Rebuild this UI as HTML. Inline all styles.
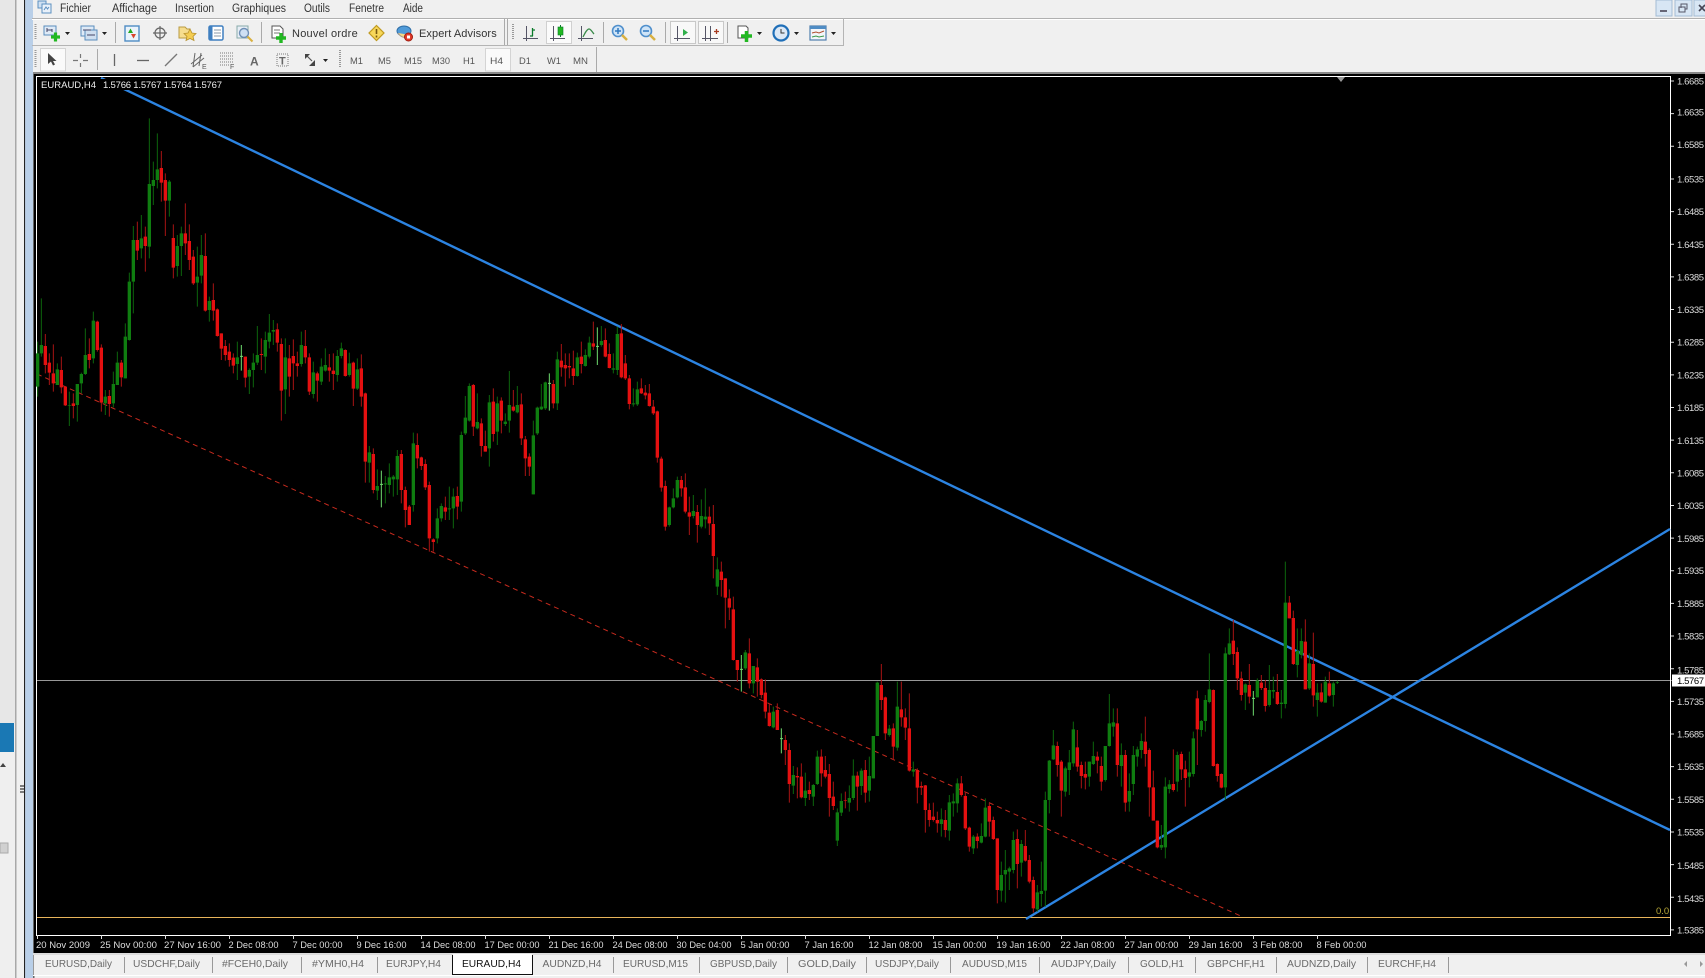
<!DOCTYPE html>
<html><head><meta charset="utf-8"><title>EURAUD,H4</title>
<style>
html,body{margin:0;padding:0;background:#f0f0f0;overflow:hidden}
svg{display:block;position:absolute;left:0;top:0}
text{font-family:"Liberation Sans",sans-serif}
.m{font-size:11.5px;fill:#333}
.t{font-size:11px;fill:#333;letter-spacing:.3px}
.tf{font-size:9.5px;fill:#555}
.p{font-size:9.5px;fill:#ddd}
.d{font-size:9.5px;fill:#ddd}
.tab{font-size:10.5px;fill:#6a6a6a}
.gw,.gb,.rw,.rb,.lg{fill:none}
.gw{stroke:#0c650c;stroke-width:3}
.gb{stroke:#0f7d10;stroke-width:10}
.rw{stroke:#a81414;stroke-width:3}
.rb{stroke:#e41010;stroke-width:10}
.lg{stroke:#6fdc6f;stroke-width:3}
</style></head><body>
<svg width="1705" height="978" viewBox="0 0 1705 978" xmlns="http://www.w3.org/2000/svg">
<!-- base -->
<rect width="1705" height="978" fill="#f0f0f0"/>
<!-- left panel -->
<rect x="0" y="0" width="15" height="723" fill="#e7e7e7"/>
<rect x="0" y="723" width="14" height="29" fill="#1a78b4"/>
<rect x="0" y="752" width="15" height="226" fill="#efefef"/>
<rect x="15" y="0" width="1.5" height="978" fill="#a8a8a8"/>
<rect x="24" y="0" width="1.2" height="978" fill="#222"/>
<rect x="25.2" y="0" width="7.8" height="978" fill="#b9cfe8"/>
<rect x="33" y="0" width="1.5" height="978" fill="#666"/>
<rect x="0" y="843" width="8" height="10" fill="#d0d0d0" stroke="#aaa"/>
<path d="M0 767h6l-3-4z" fill="#444"/>
<path d="M20 786h4M20 789h4M20 792h4" stroke="#555" stroke-width="1.5"/>
<!-- top chrome background -->
<rect x="33" y="0" width="1672" height="72" fill="#f0f0f0"/>
<rect x="32" y="18" width="1673" height="1" fill="#b0b0b0"/>
<rect x="32" y="19" width="1673" height="1" fill="#fff"/>
<rect x="32" y="45" width="811" height="1" fill="#b4b4b4"/>
<rect x="843" y="18" width="1" height="28" fill="#b4b4b4"/>
<rect x="33" y="72" width="1672" height="2" fill="#888"/>
<!-- menu -->
<g fill="none"><rect x="38" y="1" width="8" height="7" fill="#cfe0f2" stroke="#5b8fc0"/><rect x="42" y="4" width="9" height="9" fill="#e9f1fa" stroke="#5b8fc0"/><path d="M44 10l2-3 1.5 2 1.5-2" stroke="#5b8fc0"/></g>
<text class="m" x="60" y="12" textLength="31" lengthAdjust="spacingAndGlyphs">Fichier</text>
<text class="m" x="112" y="12" textLength="45" lengthAdjust="spacingAndGlyphs">Affichage</text>
<text class="m" x="175" y="12" textLength="39" lengthAdjust="spacingAndGlyphs">Insertion</text>
<text class="m" x="232" y="12" textLength="54" lengthAdjust="spacingAndGlyphs">Graphiques</text>
<text class="m" x="304" y="12" textLength="26" lengthAdjust="spacingAndGlyphs">Outils</text>
<text class="m" x="349" y="12" textLength="35" lengthAdjust="spacingAndGlyphs">Fenetre</text>
<text class="m" x="403" y="12" textLength="20" lengthAdjust="spacingAndGlyphs">Aide</text>
<!-- window buttons -->
<rect x="1656" y="0" width="16" height="16" fill="#d8e6f4" stroke="#a4bcd4"/>
<rect x="1660" y="10" width="7" height="2" fill="#667"/>
<rect x="1675" y="0" width="17" height="16" fill="#d8e6f4" stroke="#a4bcd4"/>
<path d="M1681 8V4h6v5h-2M1679 7h6v5h-6z" fill="none" stroke="#556" stroke-width="1"/>
<rect x="1694" y="0" width="12" height="16" fill="#d8e6f4" stroke="#a4bcd4"/>
<path d="M1699 5l6 6M1705 5l-6 6" stroke="#445" stroke-width="1.6"/>
<!-- grips -->
<path d="M35.5 24V40" stroke="#999" stroke-width="2" stroke-dasharray="1 1"/>
<path d="M513 24V40" stroke="#999" stroke-width="2" stroke-dasharray="1 1"/>
<path d="M35.5 50V68" stroke="#999" stroke-width="2" stroke-dasharray="1 1"/>
<path d="M340 50V68" stroke="#999" stroke-width="2" stroke-dasharray="1 1"/>
<!-- toolbar 1 separators -->
<path d="M115.500 22V43M261.500 22V43M504.500 19V45M507.500 19V45M603.500 22V43M665.500 22V43M727.500 22V43" stroke="#aaa"/>
<!-- new chart -->
<rect x="44" y="26" width="12" height="9" fill="#dfeaf6" stroke="#5a8dbd"/>
<path d="M47 28v4M47 30h5M52 29v3" stroke="#446"/>
<path d="M51 37h9M55.500 32.500v9" stroke="#22b822" stroke-width="3.200"/>
<path d="M65 32h5l-2.500 3z" fill="#222"/>
<!-- profiles -->
<rect x="81" y="26" width="13" height="10" fill="#dfeaf6" stroke="#5a8dbd"/>
<rect x="85" y="30" width="12" height="10" fill="#cfdff0" stroke="#5a8dbd"/>
<path d="M83 30h8M87 35h8" stroke="#446"/>
<path d="M102 32h5l-2.500 3z" fill="#222"/>
<!-- market watch -->
<rect x="125" y="26" width="14" height="15" fill="#eaf3fb" stroke="#4f8cc4" stroke-width="1.400"/>
<path d="M128 33l2.500-4.500 2.500 4.500z" fill="#22aa22"/><path d="M131 34l2.500 4.500 2.500-4.500z" fill="#d8452c"/>
<!-- crosshair -->
<circle cx="160" cy="33" r="5" fill="none" stroke="#666" stroke-width="1.200"/>
<path d="M160 26v14M153 33h14" stroke="#666" stroke-width="1.200"/>
<!-- folder star -->
<path d="M179 27h6l2 2h3v9h-11z" fill="#f6dd8e" stroke="#b99a42"/>
<path d="M190 29l2 4 4 .5-3 3 1 4-4-2-4 2 1-4-3-3 4-.5z" fill="#f4cd52" stroke="#b58f2a" stroke-width=".8"/>
<!-- terminal -->
<rect x="209" y="26" width="14" height="14" rx="1.500" fill="#fff" stroke="#3f7fc0" stroke-width="1.500"/>
<rect x="209" y="26" width="3.500" height="14" fill="#3f7fc0"/>
<path d="M214 30h7M214 33h7M214 36h7" stroke="#89a"/>
<!-- tester -->
<rect x="237" y="26" width="11" height="12" fill="#e8eef6" stroke="#8aa"/>
<circle cx="244" cy="33" r="4.500" fill="#cfe0f4" stroke="#6f8fb5" stroke-width="1.400"/>
<path d="M247.500 36.500l5 5" stroke="#d9b040" stroke-width="2"/>
<!-- nouvel ordre -->
<path d="M272 26h8l3 3v9h-11z" fill="#fff" stroke="#555"/>
<path d="M274 30h6M274 33h6" stroke="#777"/>
<path d="M276 38h10M281 33v10" stroke="#22b822" stroke-width="3.400"/>
<text class="t" x="292" y="37" textLength="66" lengthAdjust="spacing">Nouvel ordre</text>
<!-- alert -->
<path d="M376.500 25.500l7.500 7.500-7.500 7.500-7.500-7.500z" fill="#f7d75a" stroke="#c09a20" stroke-width="1.200"/>
<path d="M376.500 29v5M376.500 35.500v2" stroke="#7a5a10" stroke-width="1.600"/>
<!-- EA -->
<ellipse cx="404" cy="31" rx="7" ry="5" fill="#4f9ad8" stroke="#2f6ea6"/>
<path d="M398 33c3 5 9 6 12 2" fill="#f3d88a" stroke="#a98"/>
<circle cx="408.500" cy="37" r="4" fill="#e23a2a" stroke="#a01c10"/>
<rect x="407" y="35.500" width="3" height="3" fill="#fff"/>
<text class="t" x="419" y="37" textLength="78" lengthAdjust="spacing">Expert Advisors</text>
<!-- chart type -->
<g fill="none" stroke="#556" stroke-width="1">
<path d="M526.500 26V41M523 38.500H538"/>
<path d="M581.500 26V41M578 38.500H593"/>
</g>
<path d="M532.500 28V36M530 36h3M533 30h2" stroke="#0a7a2a" fill="none" stroke-width="1.300"/>
<rect x="546.500" y="21.500" width="25" height="22" fill="#fbfbfb" stroke="#d0d0d0"/>
<path d="M553.500 26V41M550 38.500H565" stroke="#556" fill="none"/>
<path d="M560.500 25V37" stroke="#0a7a2a"/><rect x="558" y="27" width="5" height="8" fill="#22b822" stroke="#0a7a2a" stroke-width=".6"/>
<path d="M583 37c2-4 4-8 6-8s3 3 5 5" fill="none" stroke="#3a8a4a" stroke-width="1.300"/>
<!-- zoom -->
<circle cx="618" cy="31" r="5.500" fill="#cfe4f7" stroke="#4f8fcc" stroke-width="1.600"/>
<path d="M615 31h6M618 28v6" stroke="#2f78c0" stroke-width="1.500"/>
<path d="M622 35l5 5" stroke="#d8b040" stroke-width="2.500"/>
<circle cx="646" cy="31" r="5.500" fill="#cfe4f7" stroke="#4f8fcc" stroke-width="1.600"/>
<path d="M643 31h6" stroke="#2f78c0" stroke-width="1.500"/>
<path d="M650 35l5 5" stroke="#d8b040" stroke-width="2.500"/>
<!-- autoscroll / shift -->
<rect x="670.500" y="21.500" width="25" height="22" fill="#f8f8f8" stroke="#c8c8c8"/>
<rect x="698.500" y="21.500" width="25" height="22" fill="#f8f8f8" stroke="#c8c8c8"/>
<path d="M677.500 26V41M674 38.500H690" stroke="#556" fill="none"/>
<path d="M683 29v7l5-3.500z" fill="#2fae4a"/>
<path d="M705.500 26V41M702 38.500H718M710.500 26V41" stroke="#556" fill="none"/>
<path d="M714 31.500h5M716.500 29v5" stroke="#a63a20" stroke-width="1.300"/>
<!-- new indicator -->
<path d="M738 26h8l2 2v10h-10z" fill="#fff" stroke="#555"/>
<path d="M741 36h11M746.500 31v11" stroke="#22b822" stroke-width="3.500"/>
<path d="M757 32h5l-2.500 3z" fill="#222"/>
<!-- clock -->
<circle cx="781" cy="33" r="7.500" fill="#dbe8f6" stroke="#1f6fb8" stroke-width="2.200"/>
<path d="M781 29v4h3.500" stroke="#333" fill="none"/>
<path d="M794 32h5l-2.500 3z" fill="#222"/>
<!-- template -->
<rect x="810" y="26" width="16" height="14" fill="#f3f6fa" stroke="#4f7fae" stroke-width="1.200"/>
<rect x="810" y="26" width="16" height="3" fill="#4f8cc4"/>
<path d="M812 33l4-1 3 1 5-2" stroke="#b05030" fill="none"/><path d="M812 37l4-1 3 1 5-1" stroke="#3a9a4a" fill="none"/>
<path d="M831 32h5l-2.500 3z" fill="#222"/>
<!-- toolbar 2 -->
<rect x="40.500" y="48.500" width="25" height="22.500" fill="#fafafa" stroke="#d4d4d4"/>
<path d="M48 53v11l3-2.500 2 4 2-1-2-3.500h3.500z" fill="#444"/>
<path d="M80.500 54v4M80.500 63v4M73 60.500h5M83 60.500h5" stroke="#777" stroke-width="1.200"/>
<path d="M97.500 49V70" stroke="#aaa"/>
<path d="M114.500 54V66" stroke="#666" stroke-width="1.300"/>
<path d="M137 60.500H149" stroke="#666" stroke-width="1.300"/>
<path d="M165 66l12-12" stroke="#777" stroke-width="1.300"/>
<path d="M191 64l11-9M193 67l11-9M195 53l-2 14M201 53l-2 13" stroke="#666" fill="none"/>
<text x="202" y="69" font-size="7" fill="#555">E</text>
<path d="M220 53h13M220 56h13M220 59h13M220 62h13M220 65h9" stroke="#777" stroke-dasharray="1 1"/>
<text x="230" y="69" font-size="7" fill="#555">F</text>
<text x="250" y="65.500" font-size="12" font-weight="bold" fill="#666">A</text>
<rect x="277" y="54" width="11" height="12" fill="none" stroke="#777" stroke-dasharray="1 1"/>
<text x="279" y="64.500" font-size="11" font-weight="bold" fill="#666">T</text>
<path d="M307 56l5 5" stroke="#555" stroke-width="1.200"/>
<path d="M305 59v-5h5zM315 60v6h-6z" fill="#444"/>
<path d="M323 59h5l-2.500 3z" fill="#222"/>
<rect x="485.500" y="48.500" width="25" height="22.500" fill="#fafafa" stroke="#d4d4d4"/>
<text class="tf" x="350" y="64" textLength="13" lengthAdjust="spacingAndGlyphs">M1</text>
<text class="tf" x="378" y="64" textLength="13" lengthAdjust="spacingAndGlyphs">M5</text>
<text class="tf" x="404" y="64" textLength="18" lengthAdjust="spacingAndGlyphs">M15</text>
<text class="tf" x="432" y="64" textLength="18" lengthAdjust="spacingAndGlyphs">M30</text>
<text class="tf" x="463" y="64" textLength="12" lengthAdjust="spacingAndGlyphs">H1</text>
<text class="tf" x="490" y="64" textLength="13" lengthAdjust="spacingAndGlyphs">H4</text>
<text class="tf" x="519" y="64" textLength="12" lengthAdjust="spacingAndGlyphs">D1</text>
<text class="tf" x="547" y="64" textLength="14" lengthAdjust="spacingAndGlyphs">W1</text>
<text class="tf" x="573" y="64" textLength="15" lengthAdjust="spacingAndGlyphs">MN</text>
<path d="M596.500 47V72" stroke="#aaa"/>
<!-- chart -->
<rect x="34" y="74" width="1671" height="879" fill="#000"/>
<path d="M36.500 76.500H1670.500V935.500H36.500Z" fill="none" stroke="#fff"/>
<path d="M37 680.500H1670" stroke="#989898"/>
<path d="M37 917.500H1670" stroke="#e8b45a"/>
<path d="M37 374L1243 917" stroke="#c62a1e" stroke-dasharray="5 4" fill="none"/>
<path d="M101 78L1670 830M1026 919L1670 529" stroke="#2c84e2" stroke-width="2.400" fill="none"/>
<!-- Candles A -->
<g transform="translate(36,110) scale(.33333)">
<path class="gw" d="M5 695V860M16 565V740M64 760V825M100 845V948M124 825V935M136 788V850M148 655V795M172 605V760M208 840V915M232 785V892M244 725V825M268 640V805M280 488V692M292 348V610M316 315V445M340 25V445M352 155V285M364 70V235M400 210V320M424 375V500M436 350V498M484 410V590M496 375V520M520 560V635M604 695V810M640 775V852M652 730V832M664 648V765M688 665V790M700 612V715M712 630V705M748 685V912M796 665V770M832 755V865M856 745V825M868 715V785M904 720V815M916 698V745M940 728V800M964 745V840M1000 1008V1118M1024 1078V1170M1048 1098V1180M1060 1060V1150M1072 1095V1160M1084 1020V1155M1132 968V1205"/>
<path class="rw" d="M28 672V790M40 730V825M52 703V845M76 740V850M88 828V888M112 850V925M160 685V775M184 632V725M196 703V905M220 840V920M256 750V830M304 335V450M328 350V485M376 123V275M388 190V378M412 343V505M448 280V435M460 343V480M472 420V525M508 370V605M532 520V632M544 595V680M556 670V750M568 690V752M580 700V770M592 730V790M628 740V832M676 685V780M724 640V725M736 685V932M760 705V860M772 688V840M784 725V800M808 660V760M820 730V855M844 785V875M880 732V815M892 730V840M928 718V800M952 755V888M976 733V890M988 848V1118M1012 1015V1150M1096 1020V1180M1108 1130V1252M1120 1185V1245M1144 970V1075M1156 1040V1080M1168 1048V1140M1180 1115V1325M1192 1285V1325"/>
<path class="lg" d="M616 705V782M612 739H621M1036 1082V1192M1032 1123H1041"/>
<path class="gb" d="M5 730V830M16 705V730M64 778V825M100 885V887M124 822V885M136 792V820M148 735V792M172 632V745M208 860V880M232 822V880M244 758V825M268 680V805M280 515V690M292 390V515M316 385V415M340 222V410M352 210V228M364 178V210M400 215V272M424 408V468M436 370V408M484 500V518M496 435V497M520 573V600M604 742V762M640 780V800M652 758V780M664 735V758M688 690V740M700 668V695M712 660V665M748 742V838M796 705V762M832 787V852M856 770V815M868 765V782M904 738V795M916 715V738M940 760V795M964 778V836M1000 1027V1058M1024 1128V1142M1048 1120V1123M1060 1102V1125M1072 1100V1108M1084 1038V1108M1132 1000V1185"/>
<path class="rb" d="M28 708V765M40 758V788M52 790V820M76 780V832M88 830V886M112 880V888M160 732V750M184 635V720M196 713V878M220 858V882M256 758V802M304 390V422M328 380V408M376 174V218M388 210V272M412 384V473M448 370V400M460 393V450M472 440V520M508 438V602M532 570V602M544 598V678M556 670V716M568 708V735M580 725V750M592 743V767M628 740V803M676 732V735M724 658V698M736 702V842M760 745V800M772 738V760M784 760V768M808 708V742M820 742V845M844 790V812M880 772V782M892 782V792M928 720V798M952 758V836M976 775V860M988 850V1055M1012 1032V1140M1096 1032V1140M1108 1140V1200M1120 1190V1245M1144 1005V1045M1156 1042V1068M1168 1062V1132M1180 1125V1285M1192 1288V1296"/>
</g>
<!-- Candles B -->
<g transform="translate(430,310) scale(.33333)">
<path class="gw" d="M22 595V700M34 580V635M58 530V630M70 535V655M94 365V605M106 258V375M118 220V335M142 250V358M178 255V470M202 260V405M226 310V348M238 183V368M262 228V310M310 332V553M322 290V375M334 222V300M346 215V300M382 125V300M442 128V200M466 118V170M478 80V145M514 48V110M550 130V190M562 50V195M610 235V290M622 215V288M718 590V650M730 535V595M742 500V565M790 555V625M814 568V655M826 535V655M862 742V855M946 1020V1080M970 1068V1150M1030 1190V1255"/>
<path class="rw" d="M46 560V630M82 530V628M130 222V378M154 325V440M166 362V425M190 235V395M214 262V370M250 240V305M274 250V405M286 378V498M298 430V498M370 210V295M394 102V200M406 130V230M418 130V205M430 122V225M454 95V190M490 35V120M526 55V142M538 100V175M574 42V205M586 135V210M598 195V298M634 205V252M646 225V268M658 222V290M670 270V315M682 302V458M694 440V545M706 512V662M754 498V560M766 490V610M778 560V675M802 585V698M838 590V675M850 585V805M874 755V860M886 805V955M898 838V930M910 860V1052M922 1050V1115M958 985V1135M982 1045V1160M994 1105V1165M1006 1108V1225M1018 1180V1250M1042 1180V1260"/>
<path class="lg" d="M358 190V302M354 220H363M502 52V165M498 109H507M934 1035V1145M930 1078H939"/>
<path class="gb" d="M22 625V685M34 588V625M58 595V598M70 560V595M94 375V575M106 323V370M118 228V332M142 336V355M178 277V415M202 280V365M226 335V342M238 285V332M262 285V307M310 376V553M322 293V370M334 290V298M346 217V295M382 148V280M442 142V198M466 135V168M478 98V140M514 93V105M550 175V179M562 72V180M610 280V283M622 238V283M718 592V645M730 565V592M742 510V562M790 603V618M814 618V650M826 620V628M862 778V830M946 1027V1075M970 1068V1120M1030 1205V1252"/>
<path class="rb" d="M46 592V605M82 558V590M130 225V350M154 340V408M166 408V425M190 275V372M214 272V332M250 290V302M274 283V385M286 388V445M298 440V470M370 222V280M394 152V172M406 165V175M418 168V172M430 175V198M454 140V162M490 100V110M526 90V140M538 132V174M574 70V202M586 160V205M598 205V282M634 235V250M646 248V256M658 250V288M670 290V310M682 304V443M694 446V533M706 528V650M754 510V535M766 532V605M778 607V620M802 606V645M838 620V640M850 642V738M874 785V810M886 805V863M898 865V893M910 898V1050M922 1050V1080M958 1030V1120M982 1072V1115M994 1108V1155M1006 1148V1205M1018 1208V1248M1042 1200V1260"/>
</g>
<!-- Candles C -->
<g transform="translate(720,640) scale(.33333)">
<path class="gw" d="M220 378V462M256 398V498M280 432V498M292 332V435M352 505V618M364 460V528M388 436V515M400 358V480M424 385V465M448 350V485M460 288V415M472 125V288M508 255V290M532 125V332M580 365V410M664 505V590M688 465V602M700 460V530M712 415V518M760 585V642M784 550V610M796 475V592M844 665V785M856 630V788M868 680V750M880 575V700M904 600V710M952 735V815M964 665V800M976 455V800M988 360V520M1000 270V360M1036 380V470M1048 330V465M1060 245V380M1108 365V440M1120 305V375M1156 318V425M1168 162V320M1180 205V290"/>
<path class="rw" d="M196 285V375M208 310V488M232 382V475M244 370V475M268 425V480M304 328V440M316 348V415M328 372V530M340 425V510M376 455V505M412 395V512M436 360V488M484 72V210M496 170V300M520 250V360M544 125V260M556 205V300M568 160V395M592 385V490M604 425V465M616 435V578M628 490V560M640 488V545M652 515V578M676 510V592M724 408V470M736 455V570M748 560V635M772 580V625M808 490V590M820 530V600M832 595V790M892 568V745M916 570V665M928 645V730M940 710V818M1012 305V410M1024 360V530M1072 270V395M1084 365V445M1096 365V448M1132 335V400M1144 350V452M1192 205V410"/>
<path class="lg" d="M184 265V340M180 296H189"/>
<path class="gb" d="M220 405V437M256 452V474M280 435V470M292 350V432M352 517V602M364 483V518M388 474V488M400 407V474M424 392V438M448 408V452M460 288V415M472 128V288M508 266V285M532 200V323M580 388V395M664 538V552M688 487V572M700 484V490M712 430V490M760 590V625M784 588V608M796 503V590M844 705V752M856 690V703M868 685V695M880 600V690M904 612V668M952 757V808M964 753V762M976 480V752M988 362V480M1000 316V358M1036 385V455M1048 367V390M1060 268V370M1108 365V410M1120 348V372M1156 318V420M1168 250V318M1180 247V260"/>
<path class="rb" d="M196 300V330M208 330V432M232 408V412M244 410V472M268 450V462M304 350V400M316 390V410M328 402V474M340 470V498M376 480V482M412 407V440M436 390V458M484 135V180M496 172V280M520 265V320M544 208V232M556 232V263M568 265V392M592 390V443M604 438V443M616 436V510M628 510V540M640 530V540M652 540V550M676 540V570M724 430V465M736 468V565M748 563V620M772 590V603M808 498V545M820 540V597M832 595V750M892 597V672M916 618V662M928 660V725M940 720V805M1012 318V375M1024 365V452M1072 322V380M1084 375V408M1096 402V413M1132 350V362M1144 378V425M1192 250V375"/>
</g>
<!-- Candles D -->
<g transform="translate(1030,550) scale(.33333)">
<path class="gw" d="M274 580V710M298 670V785M310 588V735M322 590V650M334 550V625M394 825V900M406 682V925M418 690V730M442 605V725M478 605V712M490 545V680M514 510V560M526 435V545M538 310V460M586 292V750M598 235V315M646 400V480M682 385V440M718 345V470M730 380V445M754 420V505M766 35V475M802 235V382M814 235V325M838 310V420M862 400V500M886 380V458M910 395V470M922 392V402"/>
<path class="rw" d="M286 600V785M346 500V650M358 595V800M370 662V810M382 812V895M430 598V725M454 605V690M466 632V770M502 422V645M550 418V650M562 640V695M574 670V715M610 210V345M622 292V420M634 365V452M658 342V460M694 375V420M706 390V485M742 372V465M778 138V205M790 182V345M826 208V418M850 248V470M874 400V458M898 365V440"/>
<path class="lg" d="M670 423V497M666 445H675"/>
<path class="gb" d="M274 615V648M298 723V755M310 615V702M322 598V620M334 573V600M394 885V893M406 710V892M418 703V717M442 615V695M478 667V680M490 565V672M514 513V540M526 450V513M538 418V456M586 310V712M598 280V313M646 403V428M682 392V442M718 420V465M730 420V425M754 458V462M766 158V462M802 303V345M814 273V315M838 340V415M862 428V450M886 395V458M910 400V435M922 396V398"/>
<path class="rb" d="M286 615V758M346 575V612M358 600V712M370 712V812M382 812V892M430 702V720M454 612V658M466 658V684M502 445V538M550 420V648M562 642V678M574 672V713M610 272V312M622 306V385M634 385V435M658 405V440M694 398V414M706 414V468M742 426V462M778 158V205M790 204V342M826 275V418M850 342V436M874 427V455M898 400V437"/>
</g>
<!-- top triangle -->
<path d="M1337 77h8l-4 5z" fill="#999"/>
<!-- header label -->
<rect x="37" y="79" width="190" height="11" fill="#000"/>
<text class="p" x="41" y="88" textLength="55" lengthAdjust="spacingAndGlyphs" style="fill:#eee">EURAUD,H4</text>
<text class="p" x="103" y="88" textLength="119" lengthAdjust="spacing" style="fill:#eee">1.5766 1.5767 1.5764 1.5767</text>
<text x="1656" y="914" font-size="9.5" fill="#b8a838">0.0</text>
<!-- right axis ticks -->
<path d="M1671 81h3M1671 113.650h3M1671 146.300h3M1671 178.950h3M1671 211.600h3M1671 244.250h3M1671 276.900h3M1671 309.550h3M1671 342.200h3M1671 374.850h3M1671 407.500h3M1671 440.150h3M1671 472.800h3M1671 505.450h3M1671 538.100h3M1671 570.750h3M1671 603.400h3M1671 636.050h3M1671 668.700h3M1671 701.350h3M1671 734h3M1671 766.650h3M1671 799.300h3M1671 831.950h3M1671 864.600h3M1671 897.250h3M1671 929.900h3" stroke="#ddd"/>
<g>
<text class="p" x="1677" y="84.500" textLength="27">1.6685</text>
<text class="p" x="1677" y="115.500" textLength="27">1.6635</text>
<text class="p" x="1677" y="148.200" textLength="27">1.6585</text>
<text class="p" x="1677" y="182.500" textLength="27">1.6535</text>
<text class="p" x="1677" y="215" textLength="27">1.6485</text>
<text class="p" x="1677" y="247.800" textLength="27">1.6435</text>
<text class="p" x="1677" y="280.400" textLength="27">1.6385</text>
<text class="p" x="1677" y="313" textLength="27">1.6335</text>
<text class="p" x="1677" y="345.700" textLength="27">1.6285</text>
<text class="p" x="1677" y="378.400" textLength="27">1.6235</text>
<text class="p" x="1677" y="411" textLength="27">1.6185</text>
<text class="p" x="1677" y="444" textLength="27">1.6135</text>
<text class="p" x="1677" y="476.300" textLength="27">1.6085</text>
<text class="p" x="1677" y="509" textLength="27">1.6035</text>
<text class="p" x="1677" y="541.800" textLength="27">1.5985</text>
<text class="p" x="1677" y="574" textLength="27">1.5935</text>
<text class="p" x="1677" y="607" textLength="27">1.5885</text>
<text class="p" x="1677" y="639.600" textLength="27">1.5835</text>
<text class="p" x="1677" y="673.300" textLength="27">1.5785</text>
<text class="p" x="1677" y="704.900" textLength="27">1.5735</text>
<text class="p" x="1677" y="737.500" textLength="27">1.5685</text>
<text class="p" x="1677" y="770.200" textLength="27">1.5635</text>
<text class="p" x="1677" y="802.800" textLength="27">1.5585</text>
<text class="p" x="1677" y="835.500" textLength="27">1.5535</text>
<text class="p" x="1677" y="869.100" textLength="27">1.5485</text>
<text class="p" x="1677" y="901.800" textLength="27">1.5435</text>
<text class="p" x="1677" y="933.400" textLength="27">1.5385</text>
</g>
<!-- current price box -->
<rect x="1672" y="674.500" width="33" height="12" fill="#fff"/>
<path d="M1672 680.500l-2-1v2z" fill="#fff"/>
<text x="1677" y="684" font-size="9.500" fill="#000" textLength="27">1.5767</text>
<!-- date ticks -->
<path d="M37.500 935v4M101.500 935v4M165.500 935v4M229.500 935v4M293.500 935v4M357.500 935v4M421.500 935v4M485.500 935v4M549.500 935v4M613.500 935v4M677.500 935v4M741.500 935v4M805.500 935v4M869.500 935v4M933.500 935v4M997.500 935v4M1061.500 935v4M1125.500 935v4M1189.500 935v4M1253.500 935v4M1317.500 935v4" stroke="#ddd"/>
<text class="d" x="36" y="948" textLength="54" lengthAdjust="spacingAndGlyphs">20 Nov 2009</text>
<text class="d" x="100" y="948" textLength="57" lengthAdjust="spacingAndGlyphs">25 Nov 00:00</text>
<text class="d" x="164" y="948" textLength="57" lengthAdjust="spacingAndGlyphs">27 Nov 16:00</text>
<text class="d" x="228.500" y="948" textLength="50" lengthAdjust="spacingAndGlyphs">2 Dec 08:00</text>
<text class="d" x="292.500" y="948" textLength="50" lengthAdjust="spacingAndGlyphs">7 Dec 00:00</text>
<text class="d" x="356.500" y="948" textLength="50" lengthAdjust="spacingAndGlyphs">9 Dec 16:00</text>
<text class="d" x="420.500" y="948" textLength="55" lengthAdjust="spacingAndGlyphs">14 Dec 08:00</text>
<text class="d" x="484.500" y="948" textLength="55" lengthAdjust="spacingAndGlyphs">17 Dec 00:00</text>
<text class="d" x="548.500" y="948" textLength="55" lengthAdjust="spacingAndGlyphs">21 Dec 16:00</text>
<text class="d" x="612.500" y="948" textLength="55" lengthAdjust="spacingAndGlyphs">24 Dec 08:00</text>
<text class="d" x="676.500" y="948" textLength="55" lengthAdjust="spacingAndGlyphs">30 Dec 04:00</text>
<text class="d" x="740.500" y="948" textLength="49" lengthAdjust="spacingAndGlyphs">5 Jan 00:00</text>
<text class="d" x="804.500" y="948" textLength="49" lengthAdjust="spacingAndGlyphs">7 Jan 16:00</text>
<text class="d" x="868.500" y="948" textLength="54" lengthAdjust="spacingAndGlyphs">12 Jan 08:00</text>
<text class="d" x="932.500" y="948" textLength="54" lengthAdjust="spacingAndGlyphs">15 Jan 00:00</text>
<text class="d" x="996.500" y="948" textLength="54" lengthAdjust="spacingAndGlyphs">19 Jan 16:00</text>
<text class="d" x="1060.500" y="948" textLength="54" lengthAdjust="spacingAndGlyphs">22 Jan 08:00</text>
<text class="d" x="1124.500" y="948" textLength="54" lengthAdjust="spacingAndGlyphs">27 Jan 00:00</text>
<text class="d" x="1188.500" y="948" textLength="54" lengthAdjust="spacingAndGlyphs">29 Jan 16:00</text>
<text class="d" x="1252.500" y="948" textLength="50" lengthAdjust="spacingAndGlyphs">3 Feb 08:00</text>
<text class="d" x="1316.500" y="948" textLength="50" lengthAdjust="spacingAndGlyphs">8 Feb 00:00</text>
<!-- tabs -->
<rect x="33" y="953" width="1672" height="2" fill="#dcdcdc"/>
<rect x="34" y="955" width="1671" height="20" fill="#f0f0f0"/>
<rect x="33" y="975" width="1672" height="1" fill="#fff"/>
<path d="M33.500 955V975M124.500 957V973M212.500 957V973M301.500 957V973M377.500 957V973M613.500 957V973M699.500 957V973M787.500 957V973M866.500 957V973M950.500 957V973M1039.500 957V973M1128.500 957V973M1195.500 957V973M1276.500 957V973M1367.500 957V973M1448.500 957V973" stroke="#999"/>
<path d="M452.500 955V974.500H532.500V955" fill="#fff" stroke="#111"/>
<rect x="453" y="954" width="79" height="2" fill="#fff"/>
<text class="tab" x="45" y="967" textLength="67" lengthAdjust="spacingAndGlyphs">EURUSD,Daily</text>
<text class="tab" x="133" y="967" textLength="67" lengthAdjust="spacingAndGlyphs">USDCHF,Daily</text>
<text class="tab" x="222" y="967" textLength="66" lengthAdjust="spacingAndGlyphs">#FCEH0,Daily</text>
<text class="tab" x="312" y="967" textLength="52" lengthAdjust="spacingAndGlyphs">#YMH0,H4</text>
<text class="tab" x="386" y="967" textLength="55" lengthAdjust="spacingAndGlyphs">EURJPY,H4</text>
<text class="tab" x="462" y="967" textLength="59" lengthAdjust="spacingAndGlyphs" style="fill:#111">EURAUD,H4</text>
<text class="tab" x="542.500" y="967" textLength="59" lengthAdjust="spacingAndGlyphs">AUDNZD,H4</text>
<text class="tab" x="623" y="967" textLength="65" lengthAdjust="spacingAndGlyphs">EURUSD,M15</text>
<text class="tab" x="710" y="967" textLength="67" lengthAdjust="spacingAndGlyphs">GBPUSD,Daily</text>
<text class="tab" x="798" y="967" textLength="58" lengthAdjust="spacingAndGlyphs">GOLD,Daily</text>
<text class="tab" x="875" y="967" textLength="64" lengthAdjust="spacingAndGlyphs">USDJPY,Daily</text>
<text class="tab" x="962" y="967" textLength="65" lengthAdjust="spacingAndGlyphs">AUDUSD,M15</text>
<text class="tab" x="1051" y="967" textLength="65" lengthAdjust="spacingAndGlyphs">AUDJPY,Daily</text>
<text class="tab" x="1140" y="967" textLength="44" lengthAdjust="spacingAndGlyphs">GOLD,H1</text>
<text class="tab" x="1207" y="967" textLength="58" lengthAdjust="spacingAndGlyphs">GBPCHF,H1</text>
<text class="tab" x="1287" y="967" textLength="69" lengthAdjust="spacingAndGlyphs">AUDNZD,Daily</text>
<text class="tab" x="1378" y="967" textLength="58" lengthAdjust="spacingAndGlyphs">EURCHF,H4</text>
<path d="M1687 961v6l-3-3zM1700 961v6l3-3z" fill="#999"/>
</svg>
</body></html>
